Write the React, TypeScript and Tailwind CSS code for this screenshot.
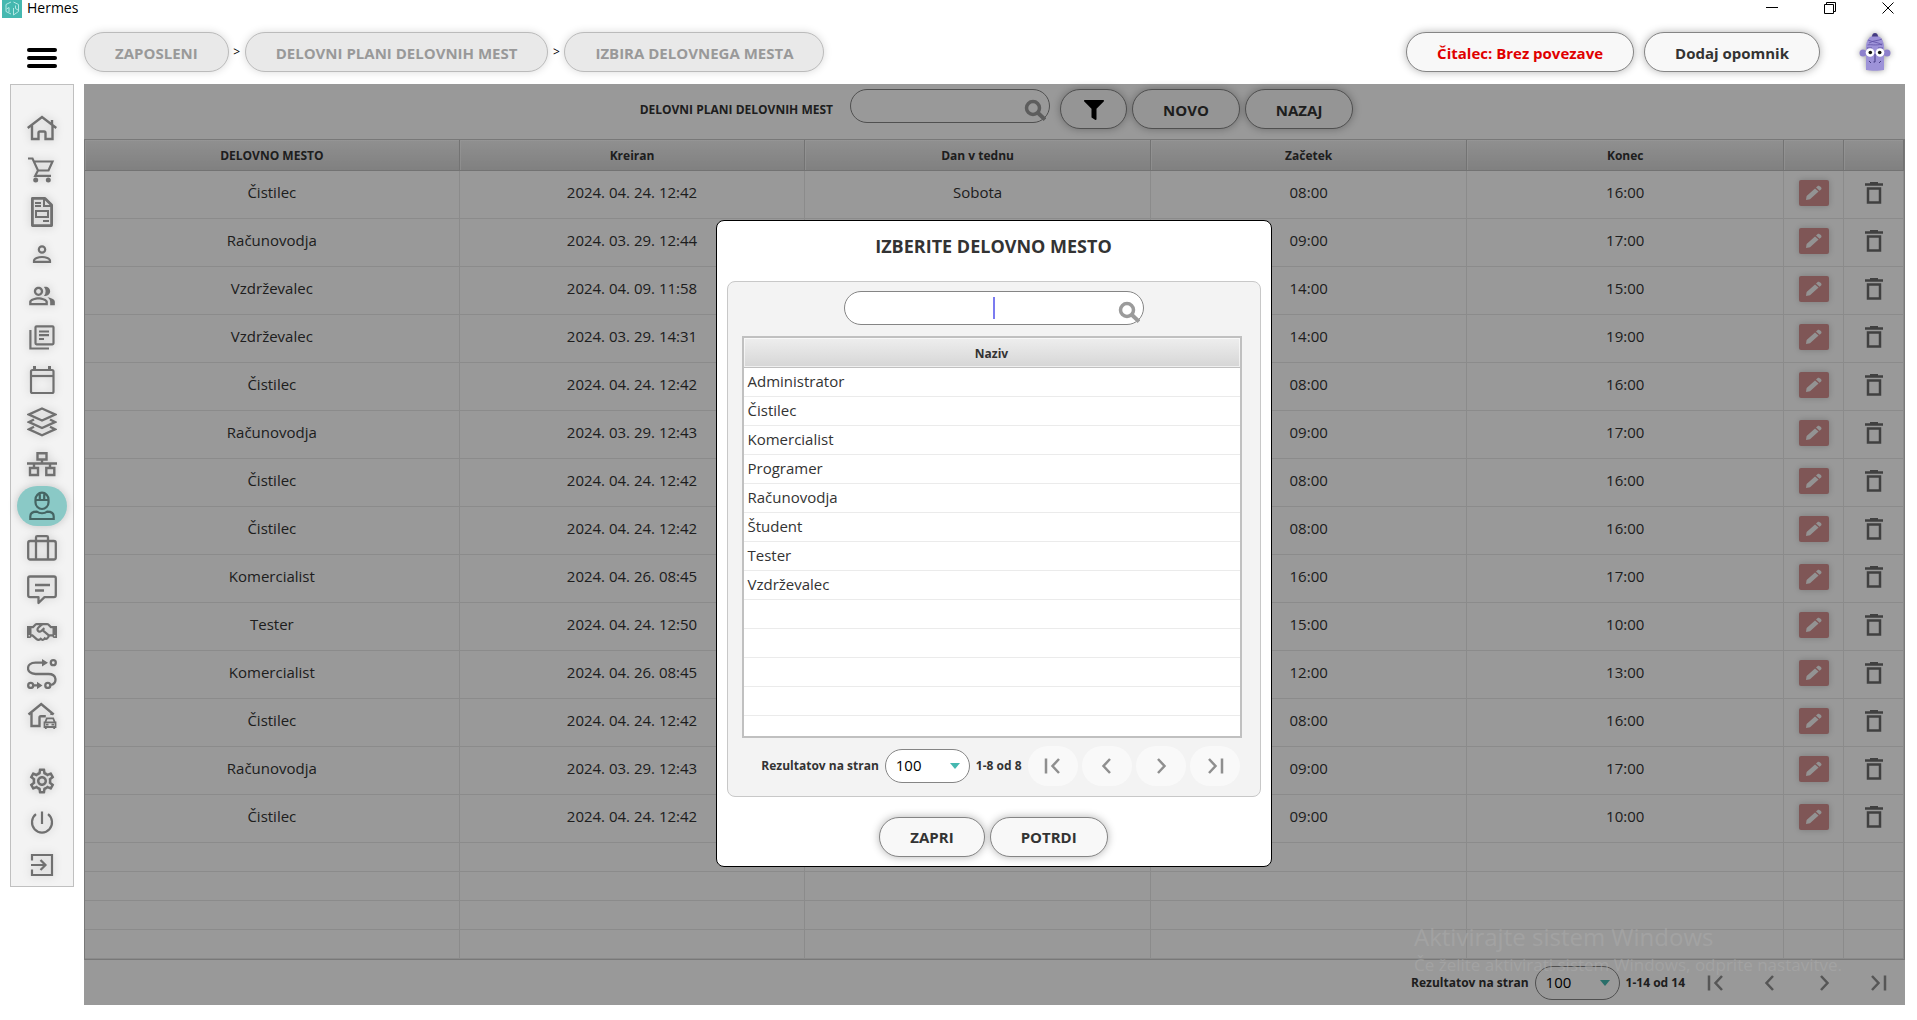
import { useState } from "react";
import type { ReactNode } from "react";
import clsx from "clsx";
import { FaFilter, FaRegHandshake } from "react-icons/fa";
import { MdOutlinePeopleAlt, MdOutlineSettings } from "react-icons/md";

interface Shift {
  job: string;
  created: string;
  day: string;
  start: string;
  end: string;
}

const SHIFTS: Shift[] = [
  { job: "Čistilec", created: "2024. 04. 24. 12:42", day: "Sobota", start: "08:00", end: "16:00" },
  { job: "Računovodja", created: "2024. 03. 29. 12:44", day: "", start: "09:00", end: "17:00" },
  { job: "Vzdrževalec", created: "2024. 04. 09. 11:58", day: "", start: "14:00", end: "15:00" },
  { job: "Vzdrževalec", created: "2024. 03. 29. 14:31", day: "", start: "14:00", end: "19:00" },
  { job: "Čistilec", created: "2024. 04. 24. 12:42", day: "", start: "08:00", end: "16:00" },
  { job: "Računovodja", created: "2024. 03. 29. 12:43", day: "", start: "09:00", end: "17:00" },
  { job: "Čistilec", created: "2024. 04. 24. 12:42", day: "", start: "08:00", end: "16:00" },
  { job: "Čistilec", created: "2024. 04. 24. 12:42", day: "", start: "08:00", end: "16:00" },
  { job: "Komercialist", created: "2024. 04. 26. 08:45", day: "", start: "16:00", end: "17:00" },
  { job: "Tester", created: "2024. 04. 24. 12:50", day: "", start: "15:00", end: "10:00" },
  { job: "Komercialist", created: "2024. 04. 26. 08:45", day: "", start: "12:00", end: "13:00" },
  { job: "Čistilec", created: "2024. 04. 24. 12:42", day: "", start: "08:00", end: "16:00" },
  { job: "Računovodja", created: "2024. 03. 29. 12:43", day: "", start: "09:00", end: "17:00" },
  { job: "Čistilec", created: "2024. 04. 24. 12:42", day: "", start: "09:00", end: "10:00" },
];

const JOBS = ["Administrator", "Čistilec", "Komercialist", "Programer", "Računovodja", "Študent", "Tester", "Vzdrževalec"];
const CRUMBS = ["ZAPOSLENI", "DELOVNI PLANI DELOVNIH MEST", "IZBIRA DELOVNEGA MESTA"];
const COLUMNS = ["DELOVNO MESTO", "Kreiran", "Dan v tednu", "Začetek", "Konec"];

function Line({ children, w = 2 }: { children: ReactNode; w?: number }) {
  return (
    <svg viewBox="0 0 30 30" className="size-[30px]" fill="none" stroke="currentColor" strokeWidth={w}>
      {children}
    </svg>
  );
}

const NAV: { label: string; icon: ReactNode }[] = [
  {
    label: "Domov",
    icon: (
      <Line w={2.4}>
        <path d="M.7 15 15 4l14.3 11M25 11.500V7M5 12.500V26h6.500v-6c0-1 .5-1.500 1.500-1.500h4c1 0 1.500.5 1.500 1.500v6H25.500V12.500" />
      </Line>
    ),
  },
  {
    label: "Prodaja",
    icon: (
      <Line w={2.2}>
        <path d="M1 3.500h4.500L11 15.500h10.500L25.500 6.500H7M11 15.500l-2.800 5.300H24" />
        <circle cx="8.700" cy="25" r="2.500" fill="currentColor" stroke="none" />
        <circle cx="21.300" cy="25" r="2.500" fill="currentColor" stroke="none" />
      </Line>
    ),
  },
  {
    label: "Dokumenti",
    icon: (
      <Line>
        <path strokeWidth="2.800" strokeLinejoin="round" d="M5.400 1.400H18l6.600 6.600v20.600H5.400z" />
        <path d="M17 1.500V9h7.500M8 6h6M8 9h6M16 24h6M9 14h12v6H9z" />
      </Line>
    ),
  },
  {
    label: "Uporabnik",
    icon: (
      <Line w={2.2}>
        <circle cx="15" cy="10.500" r="3.200" />
        <path d="M7 22.800v-1c0-2.500 4.500-3.800 8-3.800s8 1.300 8 3.800v1z" />
      </Line>
    ),
  },
  { label: "Stranke", icon: <MdOutlinePeopleAlt className="size-[28px]" /> },
  {
    label: "Katalog",
    icon: (
      <Line w={2.200}>
        <rect x="8.500" y="3.300" width="18" height="18" rx="1" />
        <path d="M3.400 7v18.500H22M12 8.500h10M12 12.200h10M12 16h5" />
      </Line>
    ),
  },
  {
    label: "Koledar",
    icon: (
      <Line w={2.200}>
        <rect x="4" y="5" width="22.500" height="23" rx="1.500" />
        <path d="M4 11h22.500" />
        <path strokeWidth="3" d="M7.500 1v4M22.500 1v4" />
      </Line>
    ),
  },
  {
    label: "Zaloga",
    icon: (
      <Line w={2.400}>
        <path d="m15 1.500 13 6-13 6-13-6zM7 12.500 2 15l13 6 13-6-5-2.500M7 19.800l-5 2.500 13 6 13-6-5-2.500" />
      </Line>
    ),
  },
  {
    label: "Struktura",
    icon: (
      <Line w={2.400}>
        <path d="M0 14.500h30M15 11v3.500M7 14.500V18M23 14.500V18M10.500 4.200h9v6.300h-9zM3 19h8v7H3zM19.300 19h8v7h-8z" />
      </Line>
    ),
  },
  {
    label: "Zaposleni",
    icon: (
      <Line w={2.200}>
        <path d="M8.500 8.500a6.500 6.800 0 0 1 13 0v3a6.500 6.500 0 0 1-13 0zM7.500 9h15M12.800 2.500V9M17.200 2.500V9" />
        <path d="M3.300 28v-2.500c0-3.500 2.700-4.800 6.500-4.800 3 2 7.400 2 10.400 0 3.800 0 6.500 1.300 6.500 4.800V28z" />
      </Line>
    ),
  },
  {
    label: "Potovanja",
    icon: (
      <Line w={2.300}>
        <rect x="1.200" y="8" width="27.600" height="18.500" rx="2" />
        <path d="M9 26.500V4.500c0-1 .5-1.300 1.300-1.300h9.400c.8 0 1.300.3 1.300 1.300v22" />
      </Line>
    ),
  },
  {
    label: "Sporočila",
    icon: (
      <Line w={2.300}>
        <path strokeLinejoin="round" d="M3 1.500h24c1.300 0 1.800.5 1.800 1.800v17c0 1.300-.5 1.900-1.800 1.900H17.500L11.500 28v-5.800H3c-1.300 0-1.800-.6-1.800-1.900v-17c0-1.300.5-1.800 1.800-1.800z" />
        <path d="M8 10h15M8 15.500h9" />
      </Line>
    ),
  },
  { label: "Partnerji", icon: <FaRegHandshake className="size-[30px]" /> },
  {
    label: "Poti",
    icon: (
      <Line w={2.300}>
        <path d="M17 3.700H8.500C-1.500 3.700-1.500 15 8.500 15h13c8.500 0 9 9 2.500 11M7 26.400h4" />
        <circle cx="26.300" cy="3.700" r="2.500" />
        <circle cx="3.700" cy="26.400" r="2.500" />
        <circle cx="20.800" cy="26.400" r="2.500" />
        <path fill="currentColor" stroke="none" d="m15 0 6 3.700-6 3.700zM10 22.700l5.500 3.700-5.500 3.700z" />
      </Line>
    ),
  },
  {
    label: "Vozila",
    icon: (
      <Line w={2.400}>
        <path d="M1.500 13.500 14.200 3l12.500 10.500M4.500 12v13h8V16.500c0-1 .5-1.300 1.300-1.300h5M24.500 11v3" />
        <path strokeWidth="1.800" d="m18.300 21 1.500-3.700h6.400l1.500 3.700M17.500 21.300h11V26h-11zM18.800 26v2M27.200 26v2M19 23.700h2.500M24.500 23.700H27" />
      </Line>
    ),
  },
];

const SYSTEM_NAV: { label: string; icon: ReactNode }[] = [
  { label: "Nastavitve", icon: <MdOutlineSettings className="size-[30px]" /> },
  {
    label: "Izklop",
    icon: (
      <Line w={2.200}>
        <path d="M15 3.500V16M9 6.200a10 10.200 0 1 0 12 0" />
      </Line>
    ),
  },
  {
    label: "Odjava",
    icon: (
      <Line w={2.200}>
        <path d="M5 10.500V5h20v20H5v-5.500M4 15h14M13.500 10l5 5-5 5" />
      </Line>
    ),
  },
];

function NavButton({ label, icon, active }: { label: string; icon: ReactNode; active?: boolean }) {
  return (
    <li className="flex h-[42px] items-center justify-center">
      <button
        type="button"
        aria-label={label}
        className={clsx(
          "flex h-10 w-[50px] items-center justify-center rounded-full drop-shadow-[0_0_4px_rgba(0,0,0,0.2)]",
          active ? "bg-[#8ac9c6] text-[#456563]" : "text-[#707070]"
        )}
      >
        {icon}
      </button>
    </li>
  );
}

function Pill({ children, className, label }: { children: ReactNode; className?: string; label?: string }) {
  return (
    <button
      type="button"
      aria-label={label}
      className={clsx(
        "flex h-10 items-center justify-center rounded-full border border-[#858585] bg-[#f8f8f8] px-[30px] pt-0.5 text-[15px] font-bold whitespace-nowrap shadow-[0_0_8px_rgba(0,0,0,0.3)]",
        className
      )}
    >
      {children}
    </button>
  );
}

function SearchIcon() {
  return (
    <svg viewBox="0 0 22 22" className="pointer-events-none absolute right-1 bottom-0.5 size-[22px] text-[#9b9b9b]" fill="none" stroke="currentColor">
      <circle cx="9" cy="9" r="6.500" strokeWidth="3.500" />
      <path d="m13.500 13.500 7.500 7" strokeWidth="4" />
    </svg>
  );
}

function PageButton({ label, d }: { label: string; d: string }) {
  return (
    <button type="button" aria-label={label} className="flex h-10 w-[50px] items-center justify-center rounded-full bg-white/50 text-[#8f8f8f]">
      <svg viewBox="0 0 18 18" className="size-[18px]" fill="none" stroke="currentColor" strokeWidth="2.500">
        <path d={d} />
      </svg>
    </button>
  );
}

function Pager({ id, range }: { id: string; range: string }) {
  const [size, setSize] = useState("100");
  return (
    <div className="flex items-center justify-end pr-0.5 text-[12px] font-bold">
      <label htmlFor={id}>Rezultatov na stran</label>
      <span className="relative mx-1.5 flex">
        <select
          id={id}
          value={size}
          onChange={(e) => setSize(e.target.value)}
          className="h-[34px] w-[85px] appearance-none rounded-full border border-[#858585] bg-white pl-2.5 text-[15px] font-normal text-black"
        >
          <option>50</option>
          <option>100</option>
        </select>
        <svg viewBox="0 0 10 6" className="pointer-events-none absolute top-3.5 right-2.5 h-1.5 w-2.5">
          <path d="M0 0h10L5 6z" fill="#45b8b0" />
        </svg>
      </span>
      <span>{range}</span>
      <div className="ml-1.5 flex gap-1">
        <PageButton label="Prva stran" d="M2 1.500v15M15 2 8.500 9l6.500 7" />
        <PageButton label="Prejšnja stran" d="M12 2 5.500 9l6.500 7" />
        <PageButton label="Naslednja stran" d="M6 2l6.500 7L6 16" />
        <PageButton label="Zadnja stran" d="M3 2l6.500 7L3 16M16 1.500v15" />
      </div>
    </div>
  );
}

function Avatar() {
  return (
    <svg viewBox="0 0 32 38" className="h-[38px] w-8 drop-shadow-[0_0_3px_rgba(0,0,0,0.4)]">
      <circle cx="4" cy="20" r="3.500" fill="#8d80cc" />
      <circle cx="28" cy="20" r="3.500" fill="#8d80cc" />
      <path d="M7 37V14C7 7 11 2.500 16 2.500S25 7 25 14v23c-5 1-13 1-18 0z" fill="#9d92d8" />
      <path d="M13 3.500C13 1 14.500 0 16 0s3 1 3 3.500z" fill="#453b82" />
      <path d="M9 7c4 2 10 2 14 5M10 10c5-3 9-2 13-4M8.500 12c4-1 7 1 15-1" fill="none" stroke="#5f52a6" strokeWidth=".8" />
      <path d="M8 15h5M19 15h5" stroke="#5f52a6" />
      <circle cx="11" cy="19.500" r="4.300" fill="#fff" />
      <circle cx="21" cy="19.500" r="4.300" fill="#fff" />
      <circle cx="11.300" cy="19.500" r="1.800" fill="#111" />
      <circle cx="20.700" cy="19.500" r="1.800" fill="#111" />
      <path d="M16 21v8h-1.500M10 28l2 2M22 28l-2 2" fill="none" stroke="#453b82" />
    </svg>
  );
}

function ShiftTable() {
  return (
    <table className="w-full table-fixed border-separate border-spacing-0 border border-[#c8c8c8] text-center">
      <colgroup>
        <col className="w-[20.6%]" />
        <col className="w-[19%]" />
        <col className="w-[19%]" />
        <col className="w-[17.4%]" />
        <col />
        <col className="w-[60px]" />
        <col className="w-[60px]" />
      </colgroup>
      <thead>
        <tr className="h-[31px] text-[12px]">
          {[...COLUMNS, "", ""].map((name, i) => (
            <th
              key={i}
              className="border-r border-b border-[#c0c0c0] bg-linear-to-b from-[#f0f0f0] to-[#d6d6d6] p-0 pt-px shadow-[inset_1px_1px_0_rgba(255,255,255,0.5)]"
            >
              {name}
            </th>
          ))}
        </tr>
      </thead>
      <tbody>
        {SHIFTS.map((s, i) => (
          <tr key={i} className="h-12 text-[15px] *:border-r *:border-b *:border-[#e8e8e8] *:p-0 *:pb-1">
            <td>{s.job}</td>
            <td>{s.created}</td>
            <td>{s.day}</td>
            <td>{s.start}</td>
            <td>{s.end}</td>
            <td>
              <button type="button" aria-label="Uredi" className="flex h-[26px] w-[30px] items-center justify-center justify-self-center rounded-[2px] bg-[#d48f8f] shadow-[0_0_6px_rgba(0,0,0,0.2)]">
                <svg viewBox="0 0 18 16" className="h-4 w-[18px]" fill="#f5f5f5">
                  <path d="m1 15 .6-4L10 3.400l3.600 3.200L5 14.300zM11 2.500l1.700-1.500C14 0 17.500 3 16.300 4.200l-1.700 1.500z" />
                </svg>
              </button>
            </td>
            <td>
              <button type="button" aria-label="Izbriši" className="flex justify-self-center text-[#6b6b6b]">
                <svg viewBox="0 0 18 24" className="h-6 w-[18px]" fill="none" stroke="currentColor">
                  <path strokeWidth="2.500" d="M0 3.500h18M5 2.200h8" />
                  <path strokeWidth="2.500" d="M3 7.500h12v14H3z" />
                </svg>
              </button>
            </td>
          </tr>
        ))}
        {[0, 1, 2, 3].map((n) => (
          <tr key={n} className="h-[29px] *:border-r *:border-b *:border-[#e8e8e8] *:p-0">
            {[...COLUMNS, "", ""].map((_, i) => (
              <td key={i} />
            ))}
          </tr>
        ))}
      </tbody>
    </table>
  );
}

function JobDialog() {
  const [query, setQuery] = useState("");
  return (
    <div role="dialog" aria-labelledby="dialog-title" className="w-[556px] rounded-lg border border-black bg-white px-2.5">
      <h2 id="dialog-title" className="flex h-[60px] items-center justify-center pb-2 text-[18px] font-bold">
        IZBERITE DELOVNO MESTO
      </h2>
      <div className="rounded-lg border border-[#c8c8c8] bg-[#f3f3f3] px-3.5 pt-[9px] pb-[10px]">
        <div className="relative mx-auto w-[300px]">
          <input
            aria-label="Iskanje delovnega mesta"
            value={query}
            onChange={(e) => setQuery(e.target.value)}
            className="block h-[34px] w-full rounded-full border border-[#858585] bg-white px-8 text-center text-[15px] caret-[#7b7bf0]"
          />
          {!query && <span className="pointer-events-none absolute top-1.5 left-1/2 h-[22px] w-0.5 -translate-x-1/2 bg-[#7b7bf0]" />}
          <SearchIcon />
        </div>
        <div className="mt-[11px] mr-1 h-[402px] overflow-hidden border-2 border-[#c0c0c0] bg-white">
          <table className="w-full border-separate border-spacing-0">
            <thead>
              <tr className="h-[30px] text-[12px]">
                <th className="border-b border-[#c0c0c0] bg-linear-to-b from-[#eeeeee] to-[#d6d6d6] p-0 pt-1 shadow-[inset_0_0_0_1px_rgba(255,255,255,0.6)]">Naziv</th>
              </tr>
            </thead>
            <tbody>
              {[...JOBS, "", "", "", "", ""].map((job, i) => (
                <tr key={i} className="h-[29px] text-[15px]">
                  <td className="border-b border-[#ebebeb] px-1 pt-0 pb-0.5 leading-6">{job}</td>
                </tr>
              ))}
            </tbody>
          </table>
        </div>
        <div className="mt-2 mr-1">
          <Pager id="job-page-size" range="1-8 od 8" />
        </div>
      </div>
      <div className="flex justify-center gap-[5px] pt-5 pb-[9px]">
        <Pill>ZAPRI</Pill>
        <Pill>POTRDI</Pill>
      </div>
    </div>
  );
}

export default function App() {
  return (
    <div className="relative min-h-screen bg-white pb-4 font-['Open_Sans','Noto_Sans',sans-serif] text-[#333]">
      <header>
        <div className="flex h-[18px] items-center justify-between pr-[23px] pl-0.5 text-black">
          <div className="flex items-start gap-[5px]">
            <svg viewBox="0 0 20 18" className="h-[18px] w-5" fill="none" stroke="#b5e8e4">
              <path stroke="none" fill="#45b8b0" d="M0 0h20v18H0z" />
              <path d="M9 2 4 4.500v7L9 14M11.500 2l5 2.500v7l-5 3.500V8M7 12V7.500L4.500 9M13.500 5.500v3L16 10" />
            </svg>
            <span className="text-[14px] leading-4">Hermes</span>
          </div>
          <div className="flex gap-[46px] pb-0.5">
            <button type="button" aria-label="Pomanjšaj">
              <svg viewBox="0 0 12 12" className="size-3" fill="none" stroke="currentColor">
                <path d="M0 5.500h12" />
              </svg>
            </button>
            <button type="button" aria-label="Obnovi">
              <svg viewBox="0 0 12 12" className="size-3" fill="none" stroke="currentColor">
                <path d="M.5 2.500h9v9h-9zM2.500 2.500v-2h9v9h-2" />
              </svg>
            </button>
            <button type="button" aria-label="Zapri okno">
              <svg viewBox="0 0 12 12" className="size-3" fill="none" stroke="currentColor">
                <path d="m.5.5 11 11M11.500.5l-11 11" />
              </svg>
            </button>
          </div>
        </div>
        <div className="flex h-[66px] items-start pt-3.5 pr-[26px] pl-[27px]">
          <button type="button" aria-label="Meni" className="mt-4 mr-[27px] flex w-[30px] flex-col gap-1">
            <span className="h-1 rounded-full bg-black" />
            <span className="h-1 rounded-full bg-black" />
            <span className="h-1 rounded-full bg-black" />
          </button>
          <nav className="flex items-center">
            {CRUMBS.map((c, i) => (
              <div key={c} className="flex items-center">
                {i > 0 && <span className="w-4 text-center text-[12px] text-black">&gt;</span>}
                <a
                  href="#"
                  className="flex h-10 items-center rounded-full border border-[#bbb] bg-[#e9e9e9] px-[30px] pt-0.5 text-[15px] font-bold text-[#999] shadow-[0_0_8px_rgba(0,0,0,0.15)]"
                >
                  {c}
                </a>
              </div>
            ))}
          </nav>
          <div className="ml-auto flex items-center gap-2.5">
            <Pill className="text-[#e00000]">Čitalec: Brez povezave</Pill>
            <Pill>Dodaj opomnik</Pill>
            <button type="button" aria-label="Profil" className="ml-[29px]">
              <Avatar />
            </button>
          </div>
        </div>
      </header>

      <div className="flex items-start pr-3 pl-2.5">
        <aside className="mr-2.5 w-16 shrink-0 border border-[#c0c0c0] bg-[#f3f3f3] pt-[22px]">
          <ul>
            {NAV.map((n) => (
              <NavButton key={n.label} label={n.label} icon={n.icon} active={n.label === "Zaposleni"} />
            ))}
          </ul>
          <ul className="mt-[23px]">
            {SYSTEM_NAV.map((n) => (
              <NavButton key={n.label} label={n.label} icon={n.icon} />
            ))}
          </ul>
        </aside>

        <main className="relative min-w-0 flex-1">
          <div className="flex h-[55px] items-start justify-center pt-[5px] pl-1">
            <h1 className="mr-[17px] flex h-10 items-center pt-0.5 text-[12px] font-bold">DELOVNI PLANI DELOVNIH MEST</h1>
            <div className="relative mr-2.5 w-[200px]">
              <input aria-label="Iskanje" className="block h-[34px] w-full rounded-full border border-[#858585] bg-white px-4 text-[15px]" />
              <SearchIcon />
            </div>
            <div className="flex gap-[5px]">
              <Pill className="w-[67px] text-black" label="Filter">
                <FaFilter className="size-5 shrink-0" />
              </Pill>
              <Pill>NOVO</Pill>
              <Pill>NAZAJ</Pill>
            </div>
          </div>
          <ShiftTable />
          <div className="flex h-[45px] items-center justify-end">
            <Pager id="page-size" range="1-14 od 14" />
          </div>
          <div className="absolute inset-0 flex items-center justify-center bg-black/40 pr-0.5 pb-[3px]">
            <JobDialog />
          </div>
        </main>
      </div>

      <div className="pointer-events-none absolute right-[75px] bottom-[44px] text-[#a9a9a9]/60">
        <p className="text-2xl leading-8">Aktivirajte sistem Windows</p>
        <p className="text-[17px] leading-6">Če želite aktivirati sistem Windows, odprite nastavitve.</p>
      </div>
    </div>
  );
}
